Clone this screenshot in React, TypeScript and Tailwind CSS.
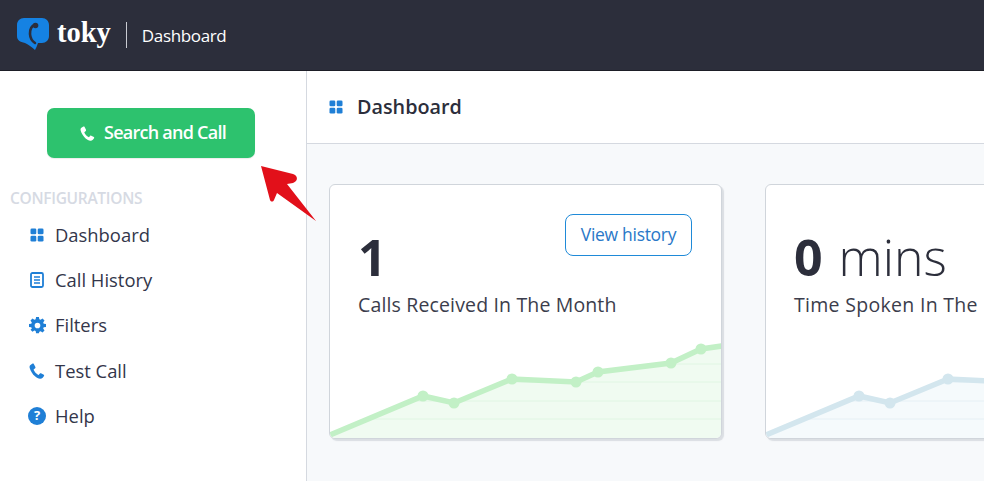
import React from "react";

const font = { fontFamily: "'Open Sans', sans-serif" };

const GridIcon = ({ className }: { className?: string }) => (
  <svg viewBox="0 0 14 14" className={className} fill="#1f7fd6">
    <rect x="0.5" y="0.5" width="5.800" height="5.800" rx="1.300" />
    <rect x="7.700" y="0.5" width="5.800" height="5.800" rx="1.300" />
    <rect x="0.5" y="7.700" width="5.800" height="5.800" rx="1.300" />
    <rect x="7.700" y="7.700" width="5.800" height="5.800" rx="1.300" />
  </svg>
);

const PhoneIcon = ({ className, color }: { className?: string; color: string }) => (
  <svg viewBox="0 0 16 16" className={className} fill={color}>
    <path d="M3.600.6 1.500 1.900C.6 2.500.4 3.600.7 4.900c.8 3.100 3 6.400 5.300 8.400 1.500 1.300 3.400 2.400 5 2.500 1 .1 2-.3 2.700-1.100l1.300-1.700c.3-.4.200-.9-.2-1.200L12 10.300c-.4-.2-.8-.2-1.100.1l-1.100 1.300c-.2.200-.5.300-.8.100C7.300 10.900 5.500 8.900 4.700 7.100c-.1-.3 0-.6.200-.8L6.200 5.200c.3-.3.400-.7.200-1.100L4.800.9C4.500.4 4 .3 3.600.6Z" />
  </svg>
);

const navItems = [
  {
    label: "Dashboard",
    icon: <GridIcon className="w-[14px] h-[14px]" />,
  },
  {
    label: "Call History",
    icon: (
      <svg viewBox="0 0 14 16" className="w-[14px] h-[16px]" fill="none" stroke="#1f7fd6">
        <rect x="1" y="1" width="12" height="14" rx="1.500" strokeWidth="1.800" />
        <path d="M4 5h6M4 8h6M4 11h6" strokeWidth="1.500" />
      </svg>
    ),
  },
  {
    label: "Filters",
    icon: (
      <svg viewBox="0 0 24 24" className="w-[17px] h-[17px]" fill="#1f7fd6">
        <path
          fillRule="evenodd"
          d="M10 1h4l.6 3.200 1.800.8L19.100 3.100 21.900 5.900 20 8.600l.8 1.800L24 11v4l-3.200.6-.8 1.800 1.900 2.700-2.800 2.800-2.700-1.900-1.800.8L14 24h-4l-.6-3.200-1.800-.8-2.700 1.900-2.800-2.800L4 17.400l-.8-1.800L0 15v-4l3.200-.6.800-1.800L2.100 5.900 4.900 3.100 7.600 5l1.800-.8L10 1Zm2 8a4 4 0 1 0 0 8 4 4 0 0 0 0-8Z"
          transform="translate(0 -1)"
        />
      </svg>
    ),
  },
  {
    label: "Test Call",
    icon: <PhoneIcon className="w-[16px] h-[16px]" color="#1f7fd6" />,
  },
  {
    label: "Help",
    icon: (
      <div className="w-[18px] h-[18px] rounded-full bg-[#1f7fd6] text-white text-[13px] font-bold flex items-center justify-center leading-none">
        ?
      </div>
    ),
  },
];

const points: [number, number][] = [
  [0, 250],
  [93, 211],
  [124, 218],
  [182, 194],
  [246, 197],
  [268, 187],
  [341, 178],
  [371, 164],
  [392, 161],
];

const Chart = ({ id, line, fill, rule }: { id: string; line: string; fill: string; rule: string }) => {
  const path = points.map(([x, y]) => `${x},${y}`).join(" ");
  const area = `${path} 392,253 0,253`;
  return (
    <svg viewBox="0 0 392 253" className="absolute inset-0 w-[392px] h-[253px]">
      <clipPath id={id}>
        <polygon points={area} />
      </clipPath>
      <polygon points={area} fill={fill} />
      <g clipPath={`url(#${id})`}>
        {[179, 197, 216, 234].map((y) => (
          <line key={y} x1="0" x2="392" y1={y} y2={y} stroke={rule} strokeWidth="1" />
        ))}
      </g>
      <polyline points={path} fill="none" stroke={line} strokeWidth="5.500" />
      {points.slice(1, -1).map(([x, y]) => (
        <circle key={x} cx={x} cy={y} r="5.500" fill={line} />
      ))}
    </svg>
  );
};

const App: React.FC = () => {
  return (
    <div className="relative w-[984px] h-[481px] overflow-hidden flex flex-col bg-white" style={font}>
      <header className="h-[71px] shrink-0 bg-[#2c2e3b] border-b border-[#1d1e27] flex items-center pl-[17px]">
        <svg viewBox="0 0 32 32" className="w-[32px] h-[32px] mb-[2px]">
          <path
            d="M7 0h18c4 0 7 3 7 7v11c0 4-3 7-7 7h-4c-1 3-2 5-3 7-3-3-6-5-10-7-5-1-8-3-8-7V7c0-4 3-7 7-7Z"
            fill="#1582e3"
          />
          <path d="M18 6.500C14.500 8 12.800 12 13 16c.2 4 2 7 5 9" fill="none" stroke="#2c2e3b" strokeWidth="2.600" strokeLinecap="round" />
          <circle cx="18.500" cy="7.500" r="2.800" fill="#2c2e3b" />
        </svg>
        <span
          className="ml-[8px] mb-[3px] text-white text-[28.500px] font-bold leading-none"
          style={{ fontFamily: "'Liberation Serif', serif" }}
        >
          toky
        </span>
        <div className="ml-[15px] w-px h-[26px] bg-[#c9cbd2]" />
        <span className="ml-[15px] mt-[2px] text-white text-[17px] tracking-[-0.35px]">Dashboard</span>
      </header>

      <div className="flex-1 flex min-h-0">
        <aside className="w-[307px] shrink-0 border-r border-[#d5d9e0] bg-white">
          <div className="mt-[37px] ml-[47px] w-[208px] h-[50px] rounded-[7px] bg-[#2dc26e] text-white flex items-center pl-[33px] gap-[9px] shadow-[0_1px_1px_rgba(0,0,0,0.08)]">
            <PhoneIcon className="w-[15px] h-[15px]" color="#ffffff" />
            <span className="text-[18px] font-semibold tracking-[-0.75px] mb-[1px]">Search and Call</span>
          </div>
          <div className="mt-[29px] ml-[10px] text-[15.500px] font-semibold leading-[22px] text-[#d6dae3] tracking-[-0.3px]">
            CONFIGURATIONS
          </div>
          <nav className="mt-[3px] flex flex-col">
            {navItems.map((item) => (
              <div key={item.label} className="h-[45.300px] flex items-center pl-[28px]">
                <div className="w-[18px] flex justify-center">{item.icon}</div>
                <span className="ml-[9px] text-[18.400px] text-[#33364a]">{item.label}</span>
              </div>
            ))}
          </nav>
        </aside>

        <main className="flex-1 min-w-0 bg-[#f7f9fb] flex flex-col">
          <div className="h-[73px] shrink-0 bg-white border-b border-[#d5d9e0] flex items-center pl-[22px]">
            <GridIcon className="w-[14px] h-[14px]" />
            <span className="ml-[14px] text-[19.800px] font-semibold text-[#2c2e3b]">Dashboard</span>
          </div>
          <div className="flex gap-[43px] pl-[22px] pt-[40px]">
            <div className="relative w-[393px] h-[255px] shrink-0 rounded-[6px] bg-white border border-[#d0d5db] shadow-[2px_2px_1px_rgba(200,205,212,0.6)] overflow-hidden">
              <Chart id="calls-area" line="#c2f0c6" fill="#f0fbf1" rule="#e0f6e3" />
              <div className="absolute top-[29px] right-[29px] w-[127px] h-[42px] pb-[2px] rounded-[8px] border border-[#1f8ad8] bg-white text-[#2a78c8] text-[17.500px] tracking-[-0.3px] flex items-center justify-center">
                View history
              </div>
              <div className="relative pl-[28px] pt-[38px]">
                <div className="text-[50px] font-bold leading-[68px] text-[#2c2e3b]">1</div>
                <div className="text-[19.500px] leading-[24px] tracking-[0.15px] text-[#3b3d4c] mt-[2px] whitespace-nowrap">
                  Calls Received In The Month
                </div>
              </div>
            </div>
            <div className="relative w-[393px] h-[255px] shrink-0 rounded-[6px] bg-white border border-[#d0d5db] shadow-[2px_2px_1px_rgba(200,205,212,0.6)] overflow-hidden">
              <Chart id="time-area" line="#d3e6ee" fill="#f5fafc" rule="#e6f0f5" />
              <div className="relative pl-[28px] pt-[38px]">
                <div className="text-[50px] leading-[68px] text-[#2c2e3b] whitespace-nowrap">
                  <span className="font-bold">0</span> <span className="font-light ml-[3px]">mins</span>
                </div>
                <div className="text-[19.500px] leading-[24px] tracking-[0.3px] text-[#3b3d4c] mt-[2px] whitespace-nowrap">
                  Time Spoken In The Month
                </div>
              </div>
            </div>
          </div>
        </main>
      </div>

      <svg viewBox="0 0 60 60" className="absolute left-[260px] top-[164px] w-[60px] h-[60px]">
        <path
          d="M1 2 33 10C38 11.500 38.500 17 33 19L27 20 56 57 17 29 14 36C13 38 11 38 10 36L1 2Z"
          fill="#e2101a"
        />
      </svg>
    </div>
  );
};

export default App;
